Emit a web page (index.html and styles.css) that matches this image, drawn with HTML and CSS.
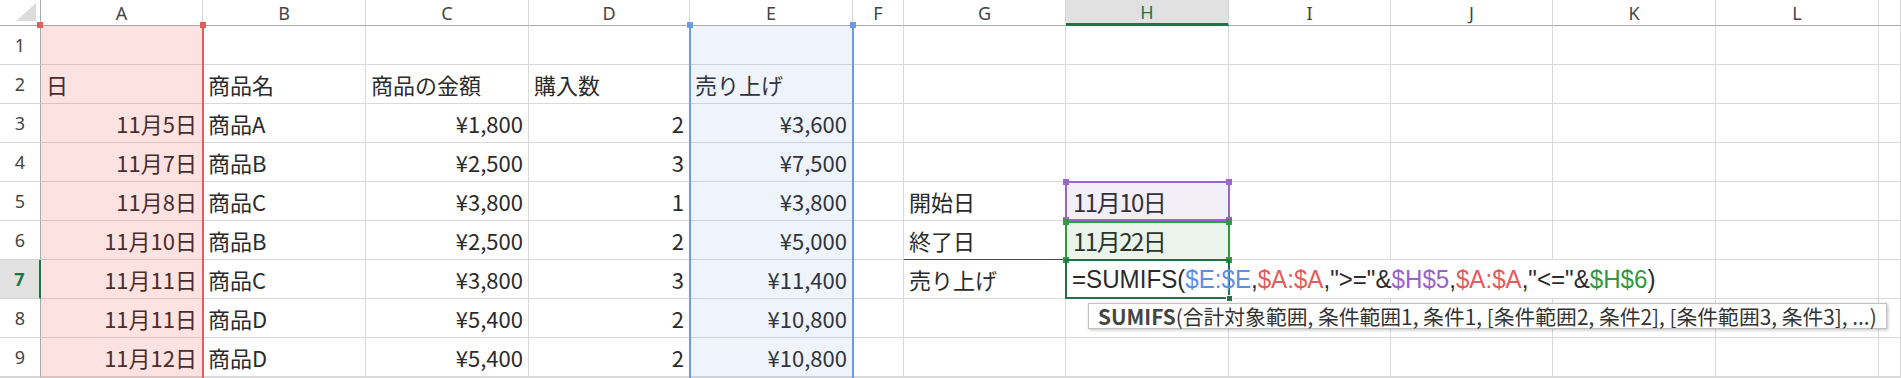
FILE: index.html
```html
<!DOCTYPE html>
<html lang="ja">
<head>
    <meta charset="UTF-8">
    <title>SUMIFS</title>
    <link rel="stylesheet" href="styles.css">
</head>
<body>
<div class="sheet">
    <div class="grid">
        <!-- header -->
        <div class="hd corner"></div>
        <div class="hd">A</div><div class="hd">B</div><div class="hd">C</div><div class="hd">D</div>
        <div class="hd">E</div><div class="hd">F</div><div class="hd">G</div><div class="hd sel">H</div>
        <div class="hd">I</div><div class="hd">J</div><div class="hd">K</div><div class="hd">L</div><div class="hd"></div>

        <!-- 1 -->
        <div class="rh">1</div>
        <div class="c"></div><div class="c"></div><div class="c"></div><div class="c"></div><div class="c"></div><div class="c"></div>
        <div class="c"></div><div class="c"></div><div class="c"></div><div class="c"></div><div class="c"></div><div class="c"></div><div class="c"></div>

        <!-- 2 -->
        <div class="rh">2</div>
        <div class="c">日</div><div class="c">商品名</div><div class="c">商品の金額</div><div class="c">購入数</div><div class="c">売り上げ</div><div class="c"></div>
        <div class="c"></div><div class="c"></div><div class="c"></div><div class="c"></div><div class="c"></div><div class="c"></div><div class="c"></div>

        <!-- 3 -->
        <div class="rh">3</div>
        <div class="c n">11月5日</div><div class="c">商品A</div><div class="c n">¥1,800</div><div class="c n">2</div><div class="c n">¥3,600</div><div class="c"></div>
        <div class="c"></div><div class="c"></div><div class="c"></div><div class="c"></div><div class="c"></div><div class="c"></div><div class="c"></div>

        <!-- 4 -->
        <div class="rh">4</div>
        <div class="c n">11月7日</div><div class="c">商品B</div><div class="c n">¥2,500</div><div class="c n">3</div><div class="c n">¥7,500</div><div class="c"></div>
        <div class="c"></div><div class="c"></div><div class="c"></div><div class="c"></div><div class="c"></div><div class="c"></div><div class="c"></div>

        <!-- 5 -->
        <div class="rh">5</div>
        <div class="c n">11月8日</div><div class="c">商品C</div><div class="c n">¥3,800</div><div class="c n">1</div><div class="c n">¥3,800</div><div class="c"></div>
        <div class="c">開始日</div><div class="c date">11月10日</div><div class="c"></div><div class="c"></div><div class="c"></div><div class="c"></div><div class="c"></div>

        <!-- 6 -->
        <div class="rh">6</div>
        <div class="c n">11月10日</div><div class="c">商品B</div><div class="c n">¥2,500</div><div class="c n">2</div><div class="c n">¥5,000</div><div class="c"></div>
        <div class="c line">終了日</div><div class="c date">11月22日</div><div class="c"></div><div class="c"></div><div class="c"></div><div class="c"></div><div class="c"></div>

        <!-- 7: the formula runs over I, J and K -->
        <div class="rh sel">7</div>
        <div class="c n">11月11日</div><div class="c">商品C</div><div class="c n">¥3,800</div><div class="c n">3</div><div class="c n">¥11,400</div><div class="c"></div>
        <div class="c">売り上げ</div>
        <div class="c wide"><span class="formula">=SUMIFS(<span class="f-e">$E:$E</span>,<span class="f-a">$A:$A</span>,&quot;&gt;=&quot;&amp;<span class="f-h5">$H$5</span>,<span class="f-a">$A:$A</span>,&quot;&lt;=&quot;&amp;<span class="f-h6">$H$6</span>)</span></div>
        <div class="c"></div><div class="c"></div>

        <!-- 8 -->
        <div class="rh">8</div>
        <div class="c n">11月11日</div><div class="c">商品D</div><div class="c n">¥5,400</div><div class="c n">2</div><div class="c n">¥10,800</div><div class="c"></div>
        <div class="c"></div><div class="c"></div><div class="c"></div><div class="c"></div><div class="c"></div><div class="c"></div><div class="c"></div>

        <!-- 9 -->
        <div class="rh">9</div>
        <div class="c n">11月12日</div><div class="c">商品D</div><div class="c n">¥5,400</div><div class="c n">2</div><div class="c n">¥10,800</div><div class="c"></div>
        <div class="c"></div><div class="c"></div><div class="c"></div><div class="c"></div><div class="c"></div><div class="c"></div><div class="c"></div>

        <!-- next row, only its top pixel shows -->
        <div class="rh"></div>
        <div class="c"></div><div class="c"></div><div class="c"></div><div class="c"></div><div class="c"></div><div class="c"></div>
        <div class="c"></div><div class="c"></div><div class="c"></div><div class="c"></div><div class="c"></div><div class="c"></div><div class="c"></div>
    </div>

    <!-- reference highlights drawn over the cells -->
    <div class="marks">
        <div class="rng rng-a"><i class="k tl"></i><i class="k tr"></i></div>
        <div class="rng rng-e"><i class="k tl"></i><i class="k tr"></i></div>
        <div class="rng rng-h5"><i class="k tl"></i><i class="k tr"></i><i class="k bl"></i><i class="k br"></i></div>
        <div class="rng rng-h6"><i class="k tl"></i><i class="k tr"></i><i class="k bl"></i><i class="k br"></i></div>
        <div class="active">
            <i class="k br"></i>
            <div class="tip"><b>SUMIFS</b>(合計対象範囲, 条件範囲1, 条件1, [条件範囲2, 条件2], [条件範囲3, 条件3], ...)</div>
        </div>
    </div>
</div>
</body>
</html>
```

FILE: styles.css
```css
* {
    margin: 0;
    padding: 0;
    box-sizing: border-box;
}
body {
    background: #fff;
    overflow: hidden;
    font-family: 'Noto Sans CJK JP', sans-serif;
    color: #2b2b2b;
}
.sheet {
    position: relative;
    width: 1901px;
    height: 378px;
    overflow: hidden;
}
.grid,
.marks {
    display: grid;
    grid-template-columns: 41px 162px 163px 163px 161px 163px 51px 162px 163px 162px 162px 163px 163px 1fr;
    grid-template-rows: 26px repeat(9, 39px) 1fr;
    height: 100%;
}
.marks {
    position: absolute;
    inset: 0;
    z-index: 1;
    pointer-events: none;
}

/* headers */
.hd {
    border-right: 1px solid #d6d6d6;
    border-bottom: 1px solid #a9a9a9;
    font-family: 'Noto Sans', sans-serif;
    font-size: 18px;
    color: #444;
    display: flex;
    align-items: center;
    justify-content: center;
}
.hd.corner {
    position: relative;
    border-right-color: #a9a9a9;
}
.hd.corner::after {
    content: "";
    position: absolute;
    right: 4px;
    bottom: 4px;
    width: 20px;
    height: 18px;
    background: #dcdcdc;
    clip-path: polygon(100% 0, 100% 100%, 0 100%);
}
.hd.sel {
    background: #e1e1e1;
    color: #217346;
    border-bottom: 3px solid #217346;
}
.rh {
    border-right: 1px solid #a9a9a9;
    border-bottom: 1px solid #d6d6d6;
    font-family: 'Noto Sans', sans-serif;
    font-size: 18px;
    color: #444;
    display: flex;
    align-items: center;
    justify-content: center;
}
.rh.sel {
    background: #e1e1e1;
    color: #217346;
    font-weight: bold;
    border-right: 2px solid #217346;
}

/* cells */
.c {
    border-right: 1px solid #dadada;
    border-bottom: 1px solid #dadada;
    display: flex;
    align-items: center;
    padding: 0 5px;
    font-size: 22px;
    white-space: nowrap;
    min-width: 0;
}
.c.n {
    justify-content: flex-end;
}
.c.line {
    border-bottom-color: #4a4a4a;
}
.c.wide {
    grid-column: span 4;
}
.c.date {
    font-size: 24px;
    letter-spacing: -1.5px;
    padding-left: 7px;
}
.formula {
    position: relative;
    z-index: 2;
    font-family: 'Liberation Sans', sans-serif;
    font-size: 25px;
    display: inline-block;
    transform: scaleX(0.965);
    transform-origin: left center;
    margin-left: 1px;
}
.f-e { color: #5b8ee6; }
.f-a { color: #e45b5b; }
.f-h5 { color: #9a5fd0; }
.f-h6 { color: #2e9a3e; }

/* range marks */
.rng {
    position: relative;
}
.rng-a {
    grid-column: 2;
    grid-row: 2 / -1;
    background: rgba(242, 62, 62, 0.15);
    border-right: 2px solid #e35d5d;
    margin-right: -1px;
}
.rng-e {
    grid-column: 6;
    grid-row: 2 / -1;
    background: rgba(85, 135, 225, 0.1);
    border-left: 2px solid #6e99e8;
    border-right: 2px solid #6e99e8;
    margin-left: -1px;
    margin-right: -1px;
}
.rng-h5 {
    grid-column: 9;
    grid-row: 6;
    background: rgba(135, 95, 195, 0.1);
    border: 2px solid #9966cc;
    margin: -1px -1px 0 -1px;
}
.rng-h6 {
    grid-column: 9;
    grid-row: 7;
    background: rgba(55, 145, 45, 0.1);
    border: 2px solid #2f9a3f;
    margin: 0 -1px -1px -1px;
}
.rng-a .k { background: #e35d5d; }
.rng-e .k { background: #6e99e8; }
.rng-h5 .k { background: #9966cc; }
.rng-h6 .k { background: #2f9a3f; }

.k {
    position: absolute;
    width: 6px;
    height: 6px;
}
.k.tl { left: -4px; top: -4px; }
.k.tr { right: -4px; top: -4px; }
.k.bl { left: -4px; bottom: -4px; }
.k.br { right: -4px; bottom: -4px; }

.active {
    grid-column: 9;
    grid-row: 8;
    position: relative;
    border: 2px solid #217346;
    margin: -1px -1px 0 -1px;
}
.active .k {
    background: #217346;
    width: 7px;
    height: 7px;
    border: 1px solid #fff;
    right: -5px;
    bottom: -5px;
}
.tip {
    position: absolute;
    left: 21px;
    top: calc(100% + 6px);
    height: 26px;
    padding: 0 9px;
    background: #fff;
    border: 1px solid #c3c3c3;
    box-shadow: 1px 1px 3px rgba(0, 0, 0, 0.25);
    font-size: 20.8px;
    line-height: 24px;
    color: #333;
    white-space: nowrap;
}
.tip b {
    color: #444;
}
```
